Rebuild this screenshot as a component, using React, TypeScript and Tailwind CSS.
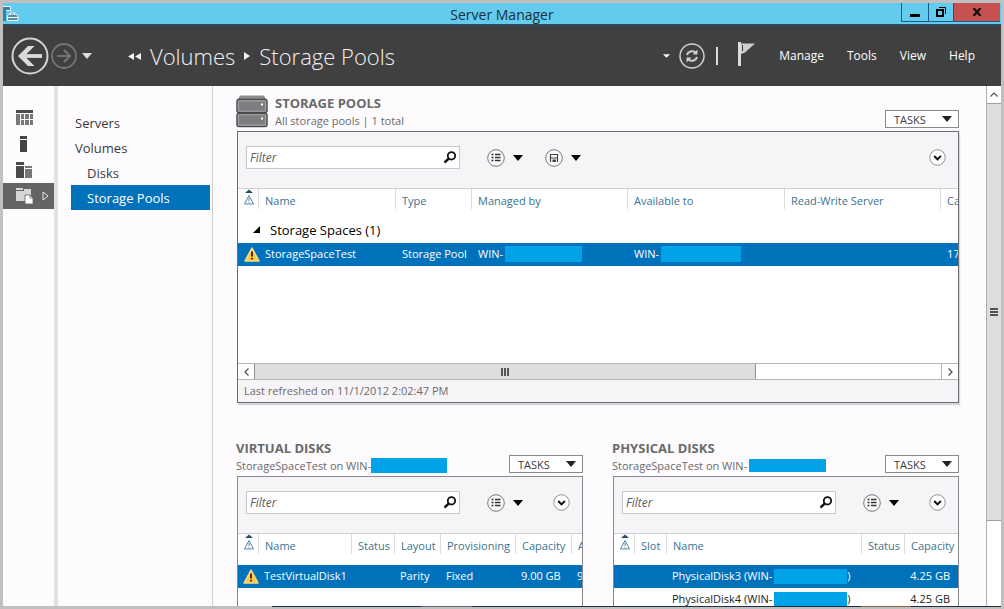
import React from "react";

type Children = { children?: React.ReactNode };

function Caret({ className = "text-black" }: { className?: string }) {
  return (
    <svg viewBox="0 0 10 6" className={`h-[6px] w-[10px] shrink-0 ${className}`} fill="currentColor" aria-hidden="true">
      <path d="M0 0h10L5 6z" />
    </svg>
  );
}

function Redacted({ className }: { className: string }) {
  return <span className={`inline-block shrink-0 bg-[#00a2e8] ${className}`} />;
}

function WindowTitleBar() {
  return (
    <div className="relative flex h-[23px] shrink-0 items-start justify-between border-b-2 border-[#2f4a5c] bg-[#62cbee]">
      <svg viewBox="0 0 16 16" className="mt-[3px] h-[16px] w-[16px]" aria-hidden="true">
        <path d="M0 .5h7.500v4H.5V15" fill="#2e86a6" stroke="#e9f7fc" />
        <path d="M0 4h3v11H0z" fill="#2e86a6" />
        <path d="M4.500 9.500l5-3.500 5.500 3.500V14.500H4.500z" fill="#5a8ea3" stroke="#eef6fa" />
        <path d="M7.500 9V8h4v1M5 11.500h10" fill="none" stroke="#eef6fa" />
      </svg>
      <h1 className="pointer-events-none absolute inset-x-0 top-0 text-center text-[14px] leading-[23px] text-[#17303c]">
        Server Manager
      </h1>
      <div className="relative mr-px flex h-[19px] border-b border-l border-[#1c5a80]">
        <button aria-label="Minimize" className="flex w-[27px] items-end justify-center border-r border-[#1c5a80] pb-[4px]">
          <span className="h-[3px] w-[10px] bg-black" />
        </button>
        <button aria-label="Restore" className="flex w-[25px] items-center justify-center border-r border-[#1c5a80]">
          <svg viewBox="0 0 10 10" className="h-[10px] w-[10px]" aria-hidden="true">
            <path d="M3 .5h6.500V7" fill="none" stroke="#000" strokeWidth="1" />
            <path d="M1 3h6v6H1z" fill="none" stroke="#000" strokeWidth="2" />
          </svg>
        </button>
        <button aria-label="Close" className="flex w-[46px] items-center justify-center bg-[#c75050]">
          <svg viewBox="0 0 10 8" className="h-[8px] w-[10px]" aria-hidden="true">
            <path d="M1.500 0l7 8M8.500 0l-7 8" stroke="#111" strokeWidth="2.200" />
          </svg>
        </button>
      </div>
    </div>
  );
}

function CommandBar() {
  return (
    <header className="flex h-[60px] shrink-0 items-center justify-between bg-[#404040] pr-[26px] pl-[8px] text-white">
      <nav className="flex items-center" aria-label="Breadcrumb">
        <button aria-label="Back">
          <svg viewBox="0 0 38 38" className="h-[38px] w-[38px]" fill="none" aria-hidden="true">
            <circle cx="19" cy="19" r="17.500" stroke="#d4d4d4" strokeWidth="2" />
            <path d="M31 19H11" stroke="#dadada" strokeWidth="3.800" />
            <path d="M17 9h6.500l-10 10 10 10H17L7 19z" fill="#dadada" />
          </svg>
        </button>
        <button aria-label="Forward" className="ml-[2px]">
          <svg viewBox="0 0 26 26" className="h-[26px] w-[26px]" fill="none" stroke="#747474" aria-hidden="true">
            <circle cx="13" cy="13" r="12" strokeWidth="1.800" />
            <path d="M6 13h13M13 7l6 6-6 6" strokeWidth="2.200" />
          </svg>
        </button>
        <button aria-label="History" className="ml-[5px]">
          <Caret className="text-[#dedede]" />
        </button>
        <div className="ml-[36px] flex items-center text-[22px] leading-[30px] font-light text-[#f2f2f2]">
          <svg viewBox="0 0 14 7" className="h-[7px] w-[14px]" fill="#f2f2f2" aria-hidden="true">
            <path d="M6 0v7L0 3.500zM13 0v7L7 3.500z" />
          </svg>
          <a href="#volumes" className="ml-[8px]">Volumes</a>
          <svg viewBox="0 0 6 8" className="mx-[9px] h-[8px] w-[6px]" fill="#f2f2f2" aria-hidden="true">
            <path d="M0 0v8l6-4z" />
          </svg>
          <a href="#pools">Storage Pools</a>
        </div>
      </nav>
      <div className="flex items-center">
        <button aria-label="Notifications menu" className="text-white">
          <svg viewBox="0 0 8 4" className="h-[4px] w-[7px]" fill="#fff" aria-hidden="true">
            <path d="M0 0h8L4 4z" />
          </svg>
        </button>
        <button aria-label="Refresh" className="ml-[9px]">
          <svg viewBox="0 0 26 26" className="h-[26px] w-[26px]" fill="none" stroke="#d0d0d0" aria-hidden="true">
            <circle cx="13" cy="13" r="12" strokeWidth="1.500" />
            <path d="M8 12a5.200 4.800 0 0 1 8.500-2.600M18 14a5.200 4.800 0 0 1-8.500 2.600" strokeWidth="2" />
            <path d="M18.500 6.500v5h-5zM7.500 19.500v-5h5z" fill="#d0d0d0" stroke="none" />
          </svg>
        </button>
        <span className="ml-[11px] h-[18px] w-[2px] bg-[#dcdcdc]" />
        <button aria-label="Notifications" className="mb-[4px] ml-[20px]">
          <svg viewBox="0 0 17 24" className="h-[24px] w-[17px]" aria-hidden="true">
            <path d="M0 0h3v24H0z" fill="#dcdcdc" />
            <path d="M3 1.500h14L7 10.500 3 12z" fill="#cfcfcf" />
            <path d="M4.500 3v6" stroke="#404040" />
          </svg>
        </button>
        <ul className="ml-[24px] flex gap-[23px] text-[12px] font-medium">
          {["Manage", "Tools", "View", "Help"].map((item) => (
            <li key={item}>
              <button>{item}</button>
            </li>
          ))}
        </ul>
      </div>
    </header>
  );
}

function IconRail() {
  const item = "flex h-[26px] w-full items-center pl-[13px]";
  return (
    <nav aria-label="Sections" className="w-[51px] shrink-0 pt-[19px]">
      <button aria-label="Dashboard" className={item}>
        <svg viewBox="0 0 18 16" className="h-[16px] w-[18px]" aria-hidden="true">
          <path d="M0 0h17v3H0z" fill="#4b4b4b" />
          <path d="M0 4h4v11H0zM5 4h3v5H5zM5 10h3v5H5zM9 4h4v5H9zM9 10h4v5H9zM14 4h3v5h-3zM14 10h3v5h-3z" fill="#777" />
        </svg>
      </button>
      <button aria-label="Local server" className={item}>
        <svg viewBox="0 0 18 16" className="h-[16px] w-[18px]" fill="#444" aria-hidden="true">
          <path d="M4 0h7v3H4zM4 4h7v12H4z" />
        </svg>
      </button>
      <button aria-label="All servers" className={item}>
        <svg viewBox="0 0 18 16" className="h-[16px] w-[18px]" aria-hidden="true">
          <path d="M0 0h8v3H0zM0 4h8v12H0z" fill="#4b4b4b" />
          <path d="M9 4h7v2H9zM9 7h7v9H9z" fill="#777" />
        </svg>
      </button>
      <button aria-label="File and Storage Services" className={`${item} bg-[#646464]`}>
        <svg viewBox="0 0 18 16" className="h-[16px] w-[18px]" aria-hidden="true">
          <path d="M0 0h7v2H0zM8 1h7v2H8zM0 3h15v4H9v6H0z" fill="#d6d6d6" />
          <path d="M9 7h5l3 3v6H9z" fill="#fff" stroke="#646464" strokeWidth=".8" />
          <path d="M14 7v3h3" fill="none" stroke="#646464" strokeWidth=".8" />
        </svg>
        <svg viewBox="0 0 7 10" className="ml-[8px] h-[10px] w-[7px]" aria-hidden="true">
          <path d="M1 1v8l5-4z" fill="none" stroke="#e8e8e8" />
        </svg>
      </button>
    </nav>
  );
}

function SideNav() {
  const link = "block h-[25px] leading-[26px]";
  return (
    <nav
      aria-label="Storage"
      className="w-[159px] shrink-0 border-r border-l-4 border-r-[#cfcfd2] border-l-[#e3e0e4] pt-[24px] pr-[2px] pl-[13px] text-[13px] text-[#3c3c3c]"
    >
      <a href="#servers" className={`${link} pl-[4px]`}>Servers</a>
      <a href="#volumes" className={`${link} pl-[4px]`}>Volumes</a>
      <a href="#disks" className={`${link} pl-[16px]`}>Disks</a>
      <a href="#pools" aria-current="page" className={`${link} bg-[#0072bc] pl-[16px] text-white`}>Storage Pools</a>
    </nav>
  );
}

function StoragePoolIcon() {
  return (
    <svg viewBox="0 0 32 33" className="mr-[7px] h-[33px] w-[32px]" aria-hidden="true">
      <path d="M4 .5h24l3 5H1z" fill="#8c8c8c" />
      <rect x="1" y="4.500" width="30" height="13" rx="2" fill="#7d7d80" stroke="#4a4a4d" strokeWidth="1.500" />
      <rect x="1" y="18.500" width="30" height="13" rx="2" fill="#7d7d80" stroke="#4a4a4d" strokeWidth="1.500" />
      <path d="M2.300 5.800h27.400v10.400H2.300zM2.300 19.800h27.400v10.400H2.300z" fill="none" stroke="#b9b9bb" strokeWidth=".8" />
      <path d="M25 8.500h2v2h-2zM25 22.500h2v2h-2z" fill="#fff" />
    </svg>
  );
}

function WarningIcon() {
  return (
    <svg viewBox="0 0 16 15" className="h-[15px] w-[16px]" aria-hidden="true">
      <path d="M8 1L15 14H1z" fill="#fcc83c" stroke="#f5d98a" strokeWidth="1.500" strokeLinejoin="round" />
      <path d="M8 4.500v5M8 10.800v1.700" stroke="#5a2b12" strokeWidth="2" />
    </svg>
  );
}

function SortedWarningHeader() {
  return (
    <svg viewBox="0 0 10 16" className="h-[16px] w-[10px]" role="img" aria-label="Alert">
      <path d="M1 4l4-3.500L9 4z" fill="#1f4e68" />
      <path d="M5 6.500L9.500 15H.5z" fill="none" stroke="#4f87a3" />
      <path d="M5 9v3M5 13v1" stroke="#4f87a3" />
    </svg>
  );
}

function TileHeader({ title, subtitle, icon }: { title: string; subtitle: React.ReactNode; icon?: React.ReactNode }) {
  return (
    <div className="-ml-px flex h-[36px] items-start justify-between text-[#6a6a6a]">
      <div className="flex min-w-0">
        {icon}
        <div className="min-w-0 whitespace-nowrap">
          <h2 className="text-[13px] leading-[17px] font-bold">{title}</h2>
          <p className="flex items-center text-[11px] leading-[17px]">{subtitle}</p>
        </div>
      </div>
      <button className="mt-[15px] flex h-[18px] w-[74px] shrink-0 items-center justify-between border border-[#8a8a8a] bg-white pr-[6px] pl-[8px] text-[11px] leading-none text-[#3c3c3c]">
        TASKS
        <Caret className="text-[#222]" />
      </button>
    </div>
  );
}

function RoundIcon({ children }: Children) {
  return (
    <svg viewBox="0 0 18 18" className="h-[18px] w-[18px]" fill="none" aria-hidden="true">
      <circle cx="9" cy="9" r="8.300" fill="#fbf9fb" stroke="#77777a" />
      {children}
    </svg>
  );
}

function Toolbar({ label, save = false }: { label: string; save?: boolean }) {
  return (
    <div className="flex h-[56px] items-start bg-[#f7f4f8] pt-[14px] pr-[12px] pl-[8px]">
      <div className="flex h-[23px] w-[214px] shrink-0 items-center border border-[#c8c6ca] bg-white pr-[2px]">
        <input
          aria-label={label}
          placeholder="Filter"
          className="min-w-0 flex-1 bg-transparent pl-[3px] text-[12px] italic outline-none placeholder:text-[#5c5c5c]"
        />
        <svg viewBox="0 0 14 13" className="h-[13px] w-[14px]" fill="none" stroke="#111" aria-hidden="true">
          <circle cx="8.500" cy="4.800" r="3.700" strokeWidth="1.800" />
          <path d="M5.800 7.500L1.500 11.500" strokeWidth="2.400" />
        </svg>
      </div>
      <div className="flex h-[23px] flex-1 items-center pl-[27px]">
        <button aria-label="Saved filters" className="flex items-center gap-[8px]">
          <RoundIcon>
            <path d="M4.500 5.500h2M4.500 8.500h2M4.500 11.500h2M8 5.500h5.500M8 8.500h5.500M8 11.500h5.500" stroke="#333" strokeWidth="1.500" />
          </RoundIcon>
          <Caret />
        </button>
        {save && (
          <button aria-label="Save filter" className="ml-[22px] flex items-center gap-[8px]">
            <RoundIcon>
              <path d="M5.500 5v8M12.500 5v8M5 5.500h8M5.500 9h7" stroke="#444" strokeWidth="1.200" />
              <path d="M7.500 10.500h3.500V13H7.500z" fill="#444" />
            </RoundIcon>
            <Caret />
          </button>
        )}
        <button aria-label="Expand" className="ml-auto">
          <svg viewBox="0 0 18 18" className="h-[17px] w-[17px]" fill="none" aria-hidden="true">
            <circle cx="9" cy="9" r="8.200" fill="#fff" stroke="#8a8a8d" />
            <path d="M5.500 7.500L9 11l3.500-3.500" stroke="#111" strokeWidth="2.200" />
          </svg>
        </button>
      </div>
    </div>
  );
}

function HeaderCell({ children }: Children) {
  return (
    <th className="p-0 text-left align-top font-normal">
      <div className="h-[20px] border-l border-[#dcdce0] pl-[6px] leading-[23px]">{children}</div>
    </th>
  );
}

function AlertHeader() {
  return (
    <th className="p-0 pl-[6px] text-left align-top">
      <SortedWarningHeader />
    </th>
  );
}

const tableStyle = "table-fixed border-collapse text-[11px] whitespace-nowrap";
const headRow = "h-[31px] border-t border-[#d0ced3] text-[#3a7391]";
const selectedRow = "h-[23px] bg-[#0072bc] text-white";

function StoragePoolsTable() {
  return (
    <table className={`${tableStyle} w-[860px]`}>
      <colgroup>
        <col className="w-[20px]" />
        <col className="w-[137px]" />
        <col className="w-[76px]" />
        <col className="w-[156px]" />
        <col className="w-[157px]" />
        <col className="w-[156px]" />
        <col />
      </colgroup>
      <thead>
        <tr className={headRow}>
          <AlertHeader />
          {["Name", "Type", "Managed by", "Available to", "Read-Write Server", "Capacity"].map((name) => (
            <HeaderCell key={name}>{name}</HeaderCell>
          ))}
        </tr>
      </thead>
      <tbody>
        <tr className="h-[23px] text-black">
          <th colSpan={7} className="p-0 pl-[15px] text-left align-top text-[13px] font-normal">
            <button className="flex items-center gap-[10px] leading-[20px]">
              <svg viewBox="0 0 7 7" className="h-[7px] w-[7px]" aria-hidden="true">
                <path d="M7 0v7H0z" />
              </svg>
              Storage Spaces (1)
            </button>
          </th>
        </tr>
        <tr className={selectedRow}>
          <td className="p-0 pl-[6px]"><WarningIcon /></td>
          <td className="p-0 pl-[7px]">StorageSpaceTest</td>
          <td className="p-0 pl-[7px]">Storage Pool</td>
          <td className="p-0 pl-[7px]">
            <div className="flex items-center gap-[2px]">WIN-<Redacted className="h-[16px] w-[77px]" /></div>
          </td>
          <td className="p-0 pl-[7px]">
            <div className="flex items-center gap-[2px]">WIN-<Redacted className="h-[16px] w-[80px]" /></div>
          </td>
          <td className="p-0" />
          <td className="p-0 pl-[7px]">17.5 GB</td>
        </tr>
      </tbody>
    </table>
  );
}

function VirtualDisksTable() {
  return (
    <table className={`${tableStyle} w-[420px]`}>
      <colgroup>
        <col className="w-[20px]" />
        <col className="w-[93px]" />
        <col className="w-[43px]" />
        <col className="w-[46px]" />
        <col className="w-[75px]" />
        <col className="w-[56px]" />
        <col />
      </colgroup>
      <thead>
        <tr className={headRow}>
          <AlertHeader />
          {["Name", "Status", "Layout", "Provisioning", "Capacity", "Allocated"].map((name) => (
            <HeaderCell key={name}>{name}</HeaderCell>
          ))}
        </tr>
      </thead>
      <tbody>
        <tr className={selectedRow}>
          <td className="p-0 pl-[5px]"><WarningIcon /></td>
          <td className="p-0 pl-[6px]">TestVirtualDisk1</td>
          <td className="p-0" />
          <td className="p-0 pl-[6px]">Parity</td>
          <td className="p-0 pl-[6px]">Fixed</td>
          <td className="p-0 pl-[6px]">9.00 GB</td>
          <td className="p-0 pl-[6px]">9.00 GB</td>
        </tr>
      </tbody>
    </table>
  );
}

function PhysicalDisksTable() {
  return (
    <table className={`${tableStyle} w-full`}>
      <colgroup>
        <col className="w-[20px]" />
        <col className="w-[32px]" />
        <col />
        <col className="w-[43px]" />
        <col className="w-[54px]" />
      </colgroup>
      <thead>
        <tr className={headRow}>
          <AlertHeader />
          {["Slot", "Name", "Status", "Capacity"].map((name) => (
            <HeaderCell key={name}>{name}</HeaderCell>
          ))}
        </tr>
      </thead>
      <tbody>
        {["PhysicalDisk3", "PhysicalDisk4"].map((disk, index) => (
          <tr key={disk} className={index === 0 ? selectedRow : "h-[23px] text-[#222]"}>
            <td className="p-0" />
            <td className="p-0" />
            <td className="p-0 pl-[6px]">
              <div className="flex items-center">
                {disk} (WIN-<Redacted className="ml-[2px] h-[15px] w-[73px]" />)
              </div>
            </td>
            <td className="p-0" />
            <td className="p-0 pr-[8px] text-right">4.25 GB</td>
          </tr>
        ))}
      </tbody>
    </table>
  );
}

function HorizontalScrollbar() {
  return (
    <div className="flex h-[17px] border-y border-[#b5b5b8] bg-white">
      <button aria-label="Scroll left" className="flex w-[16px] items-center justify-center">
        <svg viewBox="0 0 5 8" className="h-[8px] w-[5px]" fill="none" stroke="#555" strokeWidth="1.300" aria-hidden="true">
          <path d="M4.500 .5L1 4l3.500 3.500" />
        </svg>
      </button>
      <div className="flex-1">
        <div className="flex h-full w-[73%] items-center justify-center gap-[1px] border-x border-[#8e8e91] bg-[#dedede]">
          <span className="h-[8px] w-[2px] bg-[#555]" />
          <span className="h-[8px] w-[2px] bg-[#555]" />
          <span className="h-[8px] w-[2px] bg-[#555]" />
        </div>
      </div>
      <button aria-label="Scroll right" className="flex w-[17px] items-center justify-center border-l border-[#b5b5b8]">
        <svg viewBox="0 0 5 8" className="h-[8px] w-[5px]" fill="none" stroke="#555" strokeWidth="1.300" aria-hidden="true">
          <path d="M.5 .5L4 4 .5 7.500" />
        </svg>
      </button>
    </div>
  );
}

function VerticalScrollbar() {
  return (
    <div className="flex w-[15px] shrink-0 flex-col border-l border-[#b0b0b3] bg-white">
      <button aria-label="Scroll up" className="flex h-[18px] shrink-0 items-center justify-center border-b border-[#a0a0a3]">
        <svg viewBox="0 0 8 5" className="h-[5px] w-[8px]" fill="none" stroke="#555" strokeWidth="1.200" aria-hidden="true">
          <path d="M.5 4.500L4 1l3.500 3.500" />
        </svg>
      </button>
      <div className="flex-1">
        <div className="flex h-[83%] flex-col items-center justify-center gap-[1px] border-b border-[#a0a0a3] bg-[#dedcdf]">
          <span className="h-[2px] w-[8px] bg-[#555]" />
          <span className="h-[2px] w-[8px] bg-[#555]" />
          <span className="h-[2px] w-[8px] bg-[#555]" />
        </div>
      </div>
    </div>
  );
}

export default function App() {
  return (
    <div className="flex h-screen flex-col overflow-hidden bg-[#c0c0c0] px-[3px] pt-[3px] pb-[2px] font-['Open_Sans','Noto_Sans',sans-serif]">
      <WindowTitleBar />
      <CommandBar />
      <div className="flex min-h-0 flex-1 bg-[#fdfbfe]">
        <IconRail />
        <SideNav />
        <main className="min-w-0 flex-1 overflow-hidden pt-[9px] pr-[27px] pl-[24px]">
          <section>
            <TileHeader title="STORAGE POOLS" subtitle="All storage pools | 1 total" icon={<StoragePoolIcon />} />
            <div className="border border-[#6c6c70] bg-white shadow-[1px_2px_1px_#d9d6da]">
              <Toolbar label="Filter storage pools" save />
              <div className="h-[175px] overflow-hidden">
                <StoragePoolsTable />
              </div>
              <HorizontalScrollbar />
              <p className="h-[22px] bg-[#f7f4f8] pl-[6px] text-[11px] leading-[22px] text-[#6a6a6a]">
                Last refreshed on 11/1/2012 2:02:47 PM
              </p>
            </div>
          </section>
          <div className="mt-[37px] grid grid-cols-2 gap-[30px]">
            <section className="min-w-0">
              <TileHeader
                title="VIRTUAL DISKS"
                subtitle={<>StorageSpaceTest on WIN-<Redacted className="h-[15px] w-[76px]" /></>}
              />
              <div className="h-[260px] overflow-hidden border border-[#8a8a8e] bg-white">
                <Toolbar label="Filter virtual disks" />
                <VirtualDisksTable />
              </div>
            </section>
            <section className="min-w-0">
              <TileHeader
                title="PHYSICAL DISKS"
                subtitle={<>StorageSpaceTest on WIN-<Redacted className="ml-[2px] h-[13px] w-[77px]" /></>}
              />
              <div className="h-[260px] overflow-hidden border border-[#8a8a8e] bg-white">
                <Toolbar label="Filter physical disks" />
                <PhysicalDisksTable />
              </div>
            </section>
          </div>
        </main>
        <VerticalScrollbar />
      </div>
      <div className="flex h-px shrink-0">
        <span className="w-[27%] bg-[#c0c0c0]" />
        <span className="w-[15%] bg-[#1f2f3f]" />
        <span className="w-[5%] bg-[#5f6a75]" />
        <span className="flex-1 bg-[#1f2f3f]" />
        <span className="w-[5%] bg-[#8a6444]" />
        <span className="w-[9%] bg-[#1f2f3f]" />
      </div>
    </div>
  );
}
